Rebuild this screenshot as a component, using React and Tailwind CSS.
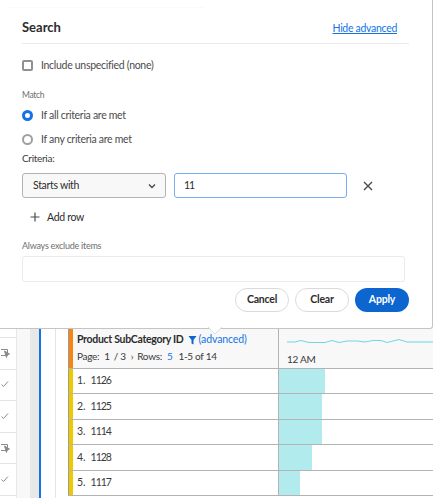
import React from "react";

const F = { fontFamily: 'Lato, sans-serif' };

function X() {
  return (
    <svg width="10" height="10" viewBox="0 0 10 10" className="text-[#4b4b4b]">
      <path d="M1 1L9 9M9 1L1 9" stroke="currentColor" strokeWidth="1.4" fill="none" />
    </svg>
  );
}

function Popover() {
  return (
    <div className="relative h-[329px] w-[433px] shrink-0 bg-white border-r border-b border-[#c4c4c4] rounded-br-[3px]">
      <div className="absolute left-[10px] top-[7px] w-[195px] h-px bg-[#fafafa]" />
      <div className="pl-[22px] pr-[23px] pt-[18px] text-[#4b4b4b]">
        <div className="flex items-center justify-between h-[19px] pr-[12px]">
          <span className="text-[13px] font-bold text-[#2c2c2c] leading-[19px]">Search</span>
          <span className="text-[10.5px] tracking-[-0.3px] text-[#1473e6] underline leading-[14px]">Hide advanced</span>
        </div>
        <div className="mt-[6px] h-[1px] bg-[#eaeaea]" />
        <div className="mt-[15px] flex items-center h-[12px]">
          <span className="w-[11px] h-[11px] border-2 border-[#909090] rounded-[2px]" />
          <span className="ml-[8px] text-[10.5px] tracking-[-0.3px] leading-[14px]">Include unspecified (none)</span>
        </div>
        <div className="mt-[18px] text-[8.5px] tracking-[-0.3px] leading-[12px] text-[#6e6e6e]">Match</div>
        <div className="mt-[7px] flex items-center h-[14px]">
          <span className="w-[11px] h-[11px] rounded-full border-[3.5px] border-[#1473e6]" />
          <span className="ml-[8px] text-[10.5px] tracking-[-0.3px] leading-[14px]">If all criteria are met</span>
        </div>
        <div className="mt-[10px] flex items-center h-[14px]">
          <span className="w-[11px] h-[11px] rounded-full border-2 border-[#a0a0a0]" />
          <span className="ml-[8px] text-[10.5px] tracking-[-0.3px] leading-[14px]">If any criteria are met</span>
        </div>
        <div className="mt-[5px] text-[10px] tracking-[-0.3px] leading-[14px] text-[#3a3a3a]">Criteria:</div>
        <div className="mt-[8px] flex items-center h-[25px]">
          <div className="w-[144px] h-[25px] flex items-center justify-between pl-[10px] pr-[8px] bg-[#f8f8f8] border border-[#b3b3b3] rounded-[3px] text-[#2c2c2c]">
            <span className="text-[10.5px] tracking-[-0.3px]">Starts with</span>
            <svg width="10" height="10" viewBox="0 0 10 10"><path d="M2 3.5L5 6.5L8 3.5" stroke="#4b4b4b" strokeWidth="1.4" fill="none" /></svg>
          </div>
          <div className="ml-[8px] w-[173px] h-[25px] flex items-center pl-[9px] border-[1.5px] border-[#78aef0] rounded-[3px] text-[10.5px] tracking-[-1px] text-[#2c2c2c]">11</div>
          <span className="ml-[16px] flex"><X /></span>
        </div>
        <div className="mt-[12px] ml-[8px] flex items-center h-[14px] text-[#2c2c2c]">
          <svg width="10" height="10" viewBox="0 0 10 10"><path d="M5 0.5V9.5M0.5 5H9.5" stroke="#4b4b4b" strokeWidth="1.2" fill="none" /></svg>
          <span className="ml-[7px] text-[10.5px] tracking-[-0.3px] leading-[14px]">Add row</span>
        </div>
        <div className="mt-[16px] text-[9px] tracking-[-0.25px] leading-[12px] text-[#6e6e6e]">Always exclude items</div>
        <div className="mt-[4px] w-[383px] h-[26px] border border-[#eaeaea] rounded-[3px]" />
        <div className="mt-[6px] flex justify-end gap-[6px]">
          <span className="w-[54px] h-[24px] flex items-center justify-center rounded-full border border-[#dadada] text-[10.5px] tracking-[-0.2px] font-bold text-[#2c2c2c]">Cancel</span>
          <span className="w-[54px] h-[24px] flex items-center justify-center rounded-full border border-[#dadada] text-[10.5px] tracking-[-0.2px] font-bold text-[#2c2c2c]">Clear</span>
          <span className="w-[54px] h-[24px] flex items-center justify-center rounded-full bg-[#0d66d0] text-[10.5px] tracking-[-0.2px] font-bold text-white">Apply</span>
        </div>
      </div>
      <svg className="absolute left-[208px] top-[327px]" width="14" height="8" viewBox="0 0 14 8">
        <path d="M0 0L7 7L14 0Z" fill="#fff" />
        <path d="M0 0L7 7L14 0" fill="none" stroke="#dcdcdc" strokeWidth="1" />
      </svg>
    </div>
  );
}

function Pointer() {
  return (
    <svg width="9" height="10" viewBox="0 0 9 10" fill="none" stroke="#8a8a8a" strokeWidth="1">
      <path d="M0 1.5H6.5V7.5H0" />
      <path d="M3.5 3L8.5 6L6 6.8L5.5 9.5Z" fill="#8a8a8a" />
    </svg>
  );
}

function Check() {
  return (
    <svg width="8" height="7" viewBox="0 0 8 7" fill="none" stroke="#8a8a8a" strokeWidth="1">
      <path d="M0.5 3.5L2.5 5.5L7 0.5" />
    </svg>
  );
}

const left = [<Pointer />, <Check />, <Check />, <Pointer />, <Check />];

const rows = [
  { n: "1.", id: "1126", w: "w-[46px]", h: "h-[25px]" },
  { n: "2.", id: "1125", w: "w-[43px]", h: "h-[26px]" },
  { n: "3.", id: "1114", w: "w-[43px]", h: "h-[25px]" },
  { n: "4.", id: "1128", w: "w-[33px]", h: "h-[26px]" },
  { n: "5.", id: "1117", w: "w-[21px]", h: "h-[25px]" },
];

function Back() {
  return (
    <div className="flex h-[169px] w-[433px] overflow-hidden bg-white">
      <div className="w-[17px] shrink-0 border-r border-[#e8e8e8] pt-[8px]">
        {left.map((ic, i) => (
          <div key={i} className="h-[31.5px] border-t border-[#e4e4e4] flex items-center justify-start pl-px">
            {ic}
          </div>
        ))}
        <div className="border-t border-[#e4e4e4]" />
      </div>
      <div className="w-[13px] shrink-0 bg-[#f8f8f8]" />
      <div className="w-[9px] shrink-0 bg-[#e8e8e8]" />
      <div className="w-[1.5px] shrink-0 bg-[#1473e6]" />
      <div className="w-[15.5px] shrink-0 border-r border-[#e4e4e4]" />
      <div className="w-[12px] shrink-0" />
      <div className="w-[365px] shrink-0 text-[#3a3a3a]">
        <div className="flex h-[40px] border-b border-[#b3b3b3] bg-[#f8f8f8]">
          <div className="w-[5px] shrink-0 bg-[#f68511] border-l border-[#9a9a9a]" />
          <div className="w-[206px] shrink-0 pl-[4px] pt-[3px] border-r border-[#b3b3b3]">
            <div className="flex items-center h-[16px] whitespace-nowrap">
              <span className="text-[10.5px] tracking-[-0.3px] font-bold text-[#2c2c2c]">Product SubCategory ID</span>
              <svg className="ml-[4px]" width="9" height="10" viewBox="0 0 9 10"><path d="M0.5 1H8.5L5.5 5V9.5L3.5 8.5V5Z" fill="#0d66d0" /></svg>
              <span className="ml-[2px] text-[10.5px] tracking-[-0.1px] text-[#1473e6]">(advanced)</span>
            </div>
            <div className="flex items-center h-[16px] text-[10px] tracking-[-0.3px] whitespace-nowrap">
              <span>Page:</span>
              <span className="ml-[5px]">1</span>
              <span className="ml-[4px]">/ 3</span>
              <span className="ml-[5px]">›</span>
              <span className="ml-[4px]">Rows:</span>
              <span className="ml-[5px] text-[#1473e6]">5</span>
              <span className="ml-[6px]">1-5 of 14</span>
            </div>
          </div>
          <div className="flex-1 pl-[8px]">
            <svg className="block mt-[8px]" width="146" height="10" viewBox="0 0 146 10" fill="none" stroke="#6fd8dc" strokeWidth="1">
              <path d="M0 5H8L14 3.5L22 5.5H38L45 3.5L52 5.5L60 4H70L78 5L86 3.5H94L100 5.5L112 2.5L120 5H146" />
            </svg>
            <div className="mt-[6px] text-[10px] tracking-[-0.3px] leading-[12px]">12 AM</div>
          </div>
        </div>
        {rows.map((r) => (
          <div key={r.n} className={`flex ${r.h} border-b border-[#b3b3b3]`}>
            <div className="w-[5px] shrink-0 bg-[#eec900] border-l border-[#9a9a9a]" />
            <div className="w-[206px] shrink-0 pl-[4px] flex items-center text-[10.5px] border-r border-[#b3b3b3]">
              <span>{r.n}</span>
              <span className="ml-[5px] tracking-[-1px]">{r.id}</span>
            </div>
            <div className="flex-1">
              <div className={`${r.w} h-full bg-[#b1ebee]`} />
            </div>
          </div>
        ))}
      </div>
    </div>
  );
}

export default function App() {
  return (
    <div style={F} className="w-[433px] h-[498px] overflow-hidden bg-white flex flex-col">
      <div className="relative z-10 flex"><Popover /></div>
      <Back />
    </div>
  );
}
